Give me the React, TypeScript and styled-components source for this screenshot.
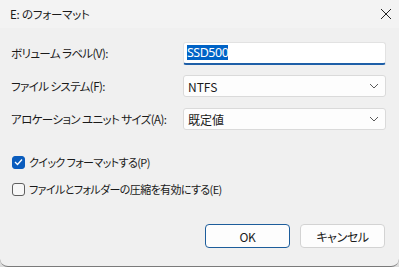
import React from 'react';
import styled, {createGlobalStyle} from 'styled-components';

const GlobalStyle = createGlobalStyle`
  html, body {
    margin: 0;
    padding: 0;
    background: #dcdcdc;
  }
  body {
    font-family: "Noto Sans CJK JP", "Noto Sans", sans-serif;
    font-size: 12px;
    font-feature-settings: "palt";
    color: #1a1a1a;
  }
`

const Window = styled.div`
  width: 399px;
  height: 266px;
  background: #f0f0f0;
  border-bottom: 1px solid #7a7a7a;
  border-radius: 0 0 8px 8px;
  display: flex;
  flex-direction: column;
  overflow: hidden;
`

const TitleBar = styled.div`
  height: 28px;
  background: #f3f3f3;
  display: flex;
  align-items: center;
  justify-content: space-between;
  padding: 0 7px 0 10px;
  font-size: 11.5px;
  letter-spacing: -0.2px;
`

const Body = styled.div`
  flex: 1;
  padding: 13px 13px 0 11px;
  display: flex;
  flex-direction: column;
`

const FieldRow = styled.div`
  display: grid;
  grid-template-columns: 172px 1fr;
  align-items: center;
  height: 24px;
  margin-bottom: 9px;
`

const Label = styled.span`
  font-size: 11.5px;
  letter-spacing: -0.6px;
  white-space: pre;
`

const TextBox = styled.div`
  height: 23px;
  background: #fff;
  border: 1px solid #e2e2e2;
  border-bottom: 2px solid #1e5fa8;
  border-radius: 3px;
  display: flex;
  align-items: center;
  padding-left: 3px;
  box-sizing: border-box;
`

const Selected = styled.span`
  background: #0063c6;
  color: #fff;
  font-family: "Noto Sans", sans-serif;
  font-size: 12.5px;
  letter-spacing: -0.5px;
  line-height: 15px;
`

const Select = styled.div`
  height: 22px;
  background: #fdfdfd;
  border: 1px solid #dadada;
  border-radius: 3px;
  display: flex;
  align-items: center;
  justify-content: space-between;
  padding: 0 6px 0 4px;
  box-sizing: border-box;
  font-size: 12px;
`

const CheckRow = styled.label<{$first?: boolean}>`
  display: flex;
  align-items: center;
  gap: 4px;
  height: 14px;
  margin-top: ${p => p.$first ? '15px' : '0'};
  margin-bottom: 13px;
  font-size: 11px;
  letter-spacing: -0.6px;
  white-space: pre;
`

const Box = styled.span<{$checked?: boolean}>`
  width: 13px;
  height: 13px;
  box-sizing: border-box;
  border-radius: 3px;
  border: 1px solid ${p => p.$checked ? '#0a5cbd' : '#5f5f5f'};
  background: ${p => p.$checked ? '#0a5cbd' : '#f7f7f7'};
  display: flex;
  align-items: center;
  justify-content: center;
  margin-left: 1px;
`

const Buttons = styled.div`
  display: flex;
  justify-content: flex-end;
  gap: 10px;
  margin-top: auto;
  padding: 0 1px 18px 0;
`

const Button = styled.button<{$primary?: boolean}>`
  width: 85px;
  height: 24px;
  border-radius: 4px;
  background: #fdfdfd;
  border: 1px solid ${p => p.$primary ? '#1d5d9b' : '#d3d3d3'};
  font-family: "Noto Sans CJK JP", "Noto Sans", sans-serif;
  font-feature-settings: "palt";
  font-size: 12px;
  letter-spacing: -0.4px;
  color: #1a1a1a;
  padding: 0;
`

const Chevron = () => (
  <svg width="10" height="6" viewBox="0 0 10 6">
    <path d="M1 1 L5 5 L9 1" fill="none" stroke="#5a5a5a" strokeWidth="1"/>
  </svg>
)

export default function App() {
  return (
    <>
      <GlobalStyle/>
      <Window>
        <TitleBar>
          <span>E: のフォーマット</span>
          <svg width="12" height="12" viewBox="0 0 12 12">
            <path d="M1 1 L11 11 M11 1 L1 11" stroke="#222" strokeWidth="1"/>
          </svg>
        </TitleBar>
        <Body>
          <FieldRow>
            <Label>ボリューム ラベル(V):</Label>
            <TextBox><Selected>SSD500</Selected></TextBox>
          </FieldRow>
          <FieldRow>
            <Label>ファイル システム(F):</Label>
            <Select><span>NTFS</span><Chevron/></Select>
          </FieldRow>
          <FieldRow>
            <Label>アロケーション ユニット サイズ(A):</Label>
            <Select><span>既定値</span><Chevron/></Select>
          </FieldRow>
          <CheckRow $first>
            <Box $checked>
              <svg width="9" height="8" viewBox="0 0 9 8">
                <path d="M1 4 L3.5 6.5 L8 1.5" fill="none" stroke="#fff" strokeWidth="1.3"/>
              </svg>
            </Box>
            クイック フォーマットする(P)
          </CheckRow>
          <CheckRow>
            <Box/>
            ファイルとフォルダーの圧縮を有効にする(E)
          </CheckRow>
          <Buttons>
            <Button $primary>OK</Button>
            <Button>キャンセル</Button>
          </Buttons>
        </Body>
      </Window>
    </>
  );
}
